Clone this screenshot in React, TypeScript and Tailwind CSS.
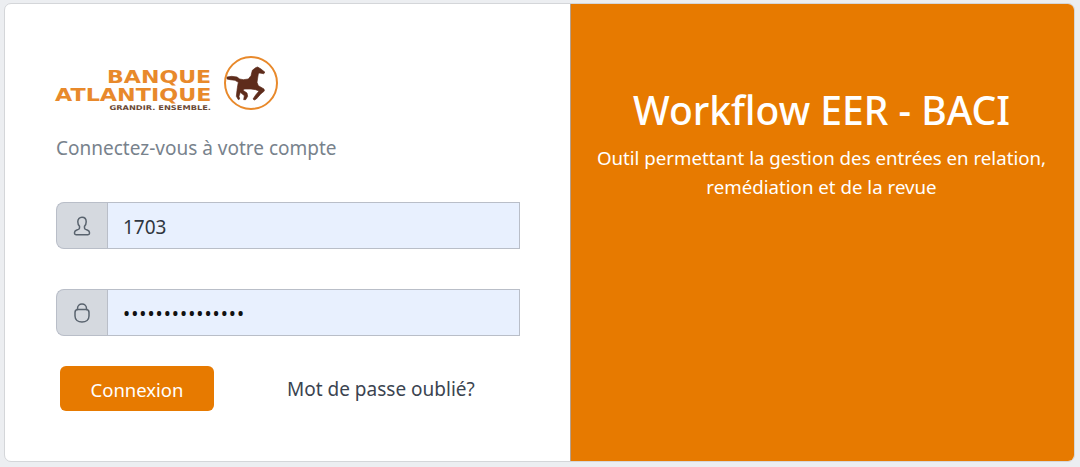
function Horse() {
  return (
    <svg width="54" height="54" viewBox="27 19 162 162" className="shrink-0">
      <circle cx="108" cy="100" r="78" fill="#fff" stroke="#e8892b" strokeWidth="6" />
      <path
        d="M36 82 L50 80 L66 82 L74 88 L85 90 L100 88 L108 78 L112 62 L122 54 L128 52 L138 58 L150 68 L146 72 L134 70 L130 72 L128 85 L126 98 L130 108 L147 118 L148 124 L138 132 L124 148 L118 151 L114 148 L122 136 L132 124 L122 120 L108 118 L88 118 L84 122 L96 130 L98 140 L92 150 L86 150 L88 138 L76 128 L72 140 L74 148 L70 150 L64 140 L66 122 L68 108 L70 98 L60 92 L45 90 L36 88 Z"
        fill="#5e2c1b"
        stroke="#5e2c1b"
        strokeWidth="2"
        strokeLinejoin="round"
      />
    </svg>
  );
}

function Logo() {
  return (
    <div className="flex h-[56px] items-center">
      <div className="flex h-[56px] w-[155px] flex-col items-end pt-[14px] font-['DejaVu_Sans'] font-bold text-[#e8892b]">
        <span className="block origin-right scale-x-[1.3] text-[17px] leading-[17px]">BANQUE</span>
        <span className="block origin-right scale-x-[1.31] whitespace-nowrap text-[17px] leading-[18px]">ATLANTIQUE</span>
        <span className="block origin-right scale-x-[1.27] whitespace-nowrap text-[6.5px] leading-[9px] text-[#6b4a35]">
          GRANDIR. ENSEMBLE.
        </span>
      </div>
      <div className="ml-[13px]">
        <Horse />
      </div>
    </div>
  );
}

function UserIcon() {
  return (
    <svg width="18" height="20" viewBox="0 0 18 20" fill="none" stroke="#59636e" strokeWidth="1.5" strokeLinejoin="round">
      <path d="M9 1.200c-2.600 0-4.200 2-4.200 4.500 0 1.900.7 3.500 1.700 4.600v1.600c0 .7-.5 1.200-1.200 1.500l-2 .8c-1 .4-1.800 1.300-1.800 2.500v.6c0 .9.700 1.400 1.500 1.400h12c.8 0 1.500-.5 1.500-1.400v-.6c0-1.200-.8-2.100-1.800-2.500l-2-.8c-.7-.3-1.200-.8-1.200-1.500v-1.600c1-1.100 1.700-2.700 1.700-4.600 0-2.500-1.600-4.500-4.200-4.500z" />
    </svg>
  );
}

function LockIcon() {
  return (
    <svg width="16" height="20" viewBox="0 0 16 20" fill="none" stroke="#59636e" strokeWidth="1.5" strokeLinecap="round">
      <path d="M3.500 6.500V5.500C3.500 2.800 5.500 1 8 1s4.500 1.800 4.500 4.500v1" />
      <path d="M1 9.500c0-1.800 1.200-3 3-3h8c1.800 0 3 1.200 3 3V13c0 3.600-3 6-7 6s-7-2.400-7-6z" />
    </svg>
  );
}

function Field({ icon, value, dark }: { icon: React.ReactNode; value: string; dark?: boolean }) {
  return (
    <div className="flex h-[47px] w-[464px]">
      <div className="flex w-[51px] items-center justify-center rounded-l-[8px] border border-r-0 border-[#b9bec8] bg-[#d5d9df]">
        {icon}
      </div>
      <div
        className={`flex flex-1 items-center border border-[#b9bec8] bg-[#e8f0fe] pl-[15px] pt-[3px] text-[19px] ${
          dark ? "tracking-[1px] text-[#111]" : "text-[#2f3640]"
        }`}
      >
        {value}
      </div>
    </div>
  );
}

export default function App() {
  return (
    <div className="h-[467px] w-[1080px] bg-[#eceef1] pl-[4px] pt-[3px] font-['Noto_Sans',sans-serif]">
      <div className="flex h-[459px] w-[1071px] overflow-hidden rounded-[7px] border border-[#d4d6d9] bg-white">
        <div className="flex w-[565px] flex-col pl-[51px] pt-[51px]">
          <Logo />
          <p className="mt-[23px] whitespace-nowrap text-[19px] leading-[28px] text-[#78828c]">Connectez-vous à votre compte</p>
          <div className="mt-[40px]">
            <Field icon={<UserIcon />} value="1703" />
          </div>
          <div className="mt-[40px]">
            <Field icon={<LockIcon />} value="•••••••••••••••" dark />
          </div>
          <div className="mt-[30px] flex items-center pl-[4px]">
            <button className="h-[45px] w-[154px] rounded-[6px] bg-[#e77a00] pt-[2px] text-[18.5px] text-white">Connexion</button>
            <span className="ml-[73px] pt-[2px] text-[19px] text-[#3b4450]">Mot de passe oublié?</span>
          </div>
        </div>
        <div className="flex flex-1 flex-col items-center border-l border-[#b9a08a] bg-[#e77a00] pr-[2px] pt-[78px] text-white">
          <h1 className="text-[39px] font-medium leading-[56px]">Workflow EER - BACI</h1>
          <p className="mt-[5px] w-[480px] text-center text-[18.7px] leading-[29px]">
            Outil permettant la gestion des entrées en relation, remédiation et de la revue
          </p>
        </div>
      </div>
    </div>
  );
}
